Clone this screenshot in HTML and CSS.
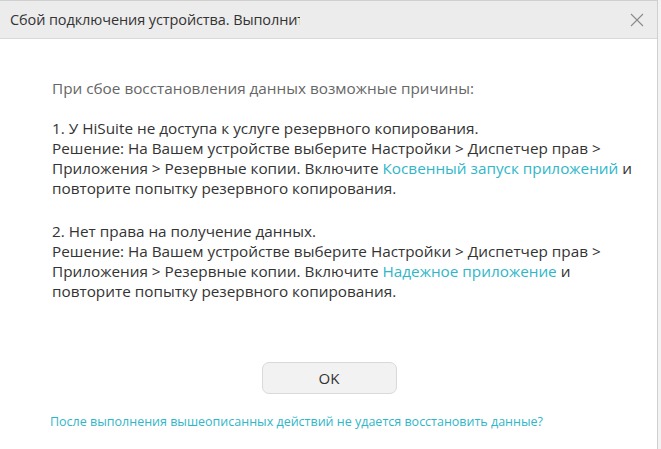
FILE: index.html
```html
<!DOCTYPE html>
<html lang="ru">
<head>
<meta charset="utf-8">
<link rel="stylesheet" href="styles.css">
</head>
<body>
<div class="window">
  <div class="titlebar">
    <div class="title">Сбой подключения устройства. Выполните</div>
    <svg class="close" width="14" height="14" viewBox="0 0 14 14"><path d="M1 1L13 13M13 1L1 13" stroke="#8a8a8a" stroke-width="1.1" fill="none"/></svg>
  </div>
  <div class="content">
    <p class="intro">При сбое восстановления данных возможные причины:</p>
    <p class="item first">1. У HiSuite не доступа к услуге резервного копирования.<br>Решение: На Вашем устройстве выберите Настройки &gt; Диспетчер прав &gt;<br>Приложения &gt; Резервные копии. Включите <span class="link">Косвенный запуск приложений</span> и<br>повторите попытку резервного копирования.</p>
    <p class="item">2. Нет права на получение данных.<br>Решение: На Вашем устройстве выберите Настройки &gt; Диспетчер прав &gt;<br>Приложения &gt; Резервные копии. Включите <span class="link">Надежное приложение</span> и<br>повторите попытку резервного копирования.</p>
  </div>
  <div class="actions">
    <button class="ok">OK</button>
  </div>
  <div class="footer"><span class="link">После выполнения вышеописанных действий не удается восстановить данные?</span></div>
</div>
</body>
</html>
```
FILE: styles.css
```css
html, body {
  margin: 0;
  padding: 0;
  background: #f3f3f3;
}
body {
  width: 661px;
  height: 449px;
  overflow: hidden;
  font-family: "Open Sans", "Noto Sans", sans-serif;
}
.window {
  width: 658px;
  height: 449px;
  background: #ffffff;
  border-top: 1px solid #cfcfcf;
  border-right: 1px solid #cfcfcf;
  box-sizing: border-box;
  display: flex;
  flex-direction: column;
}
.titlebar {
  height: 37px;
  background: #ececec;
  border-bottom: 1px solid #d9d9d9;
  display: flex;
  align-items: center;
  justify-content: space-between;
  padding: 0 13px 0 10px;
  flex-shrink: 0;
}
.title {
  width: 290px;
  overflow: hidden;
  white-space: nowrap;
  font-size: 14.5px;
  color: #333;
  letter-spacing: -0.1px;
}
.close {
  display: block;
}
.content {
  padding: 39px 0 0 52px;
  font-size: 15.3px;
  line-height: 20px;
  color: #333;
}
.content p {
  margin: 0 0 20px 0;
}
.content p.first {
  margin-bottom: 23px;
}
.intro {
  color: #666;
}
.link {
  color: #30b6c8;
}
.actions {
  display: flex;
  justify-content: center;
  margin-top: 41px;
}
.ok {
  width: 135px;
  height: 32px;
  margin-left: 1px;
  background: #f2f2f2;
  border: 1px solid #d9d9d9;
  border-radius: 7px;
  font-family: inherit;
  font-size: 15px;
  color: #333;
  padding: 0;
}
.footer {
  padding: 20px 0 0 50px;
  font-size: 12.5px;
  line-height: 16px;
}
```
